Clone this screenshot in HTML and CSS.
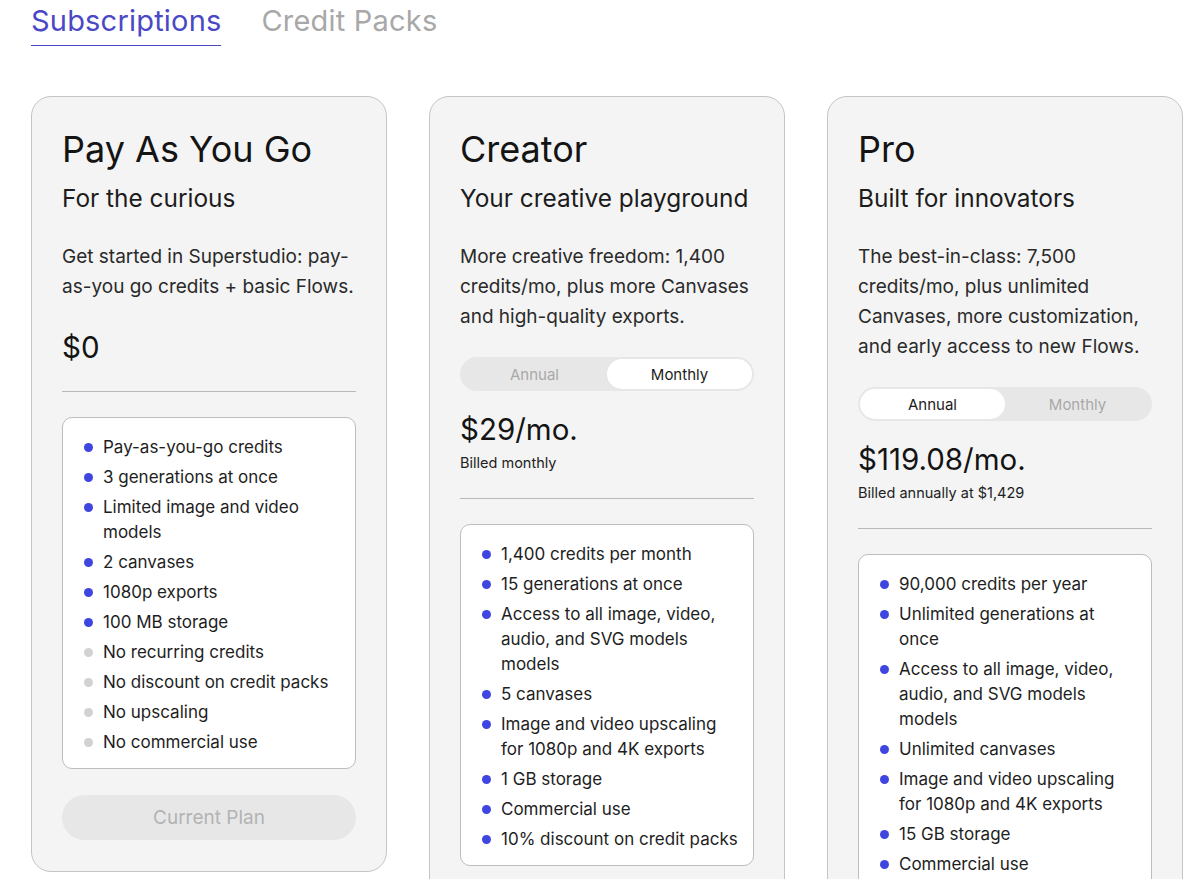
FILE: index.html
```html
<!DOCTYPE html>
<html>
<head>
<meta charset="utf-8">
<link rel="stylesheet" href="styles.css">
</head>
<body>
<div class="page">
  <nav class="tabs">
    <div class="tab active">Subscriptions</div>
    <div class="tab">Credit Packs</div>
  </nav>
  <div class="cards">
    <section class="card">
      <h2 class="title">Pay As You Go</h2>
      <div class="subtitle">For the curious</div>
      <p class="desc">Get started in Superstudio: pay-as-you go credits + basic Flows.</p>
      <div class="price price-free">$0</div>
      <hr class="divider">
      <ul class="features">
        <li>Pay-as-you-go credits</li>
        <li>3 generations at once</li>
        <li>Limited image and video models</li>
        <li>2 canvases</li>
        <li>1080p exports</li>
        <li>100 MB storage</li>
        <li class="off">No recurring credits</li>
        <li class="off">No discount on credit packs</li>
        <li class="off">No upscaling</li>
        <li class="off">No commercial use</li>
      </ul>
      <button class="btn-current">Current Plan</button>
    </section>
    <section class="card">
      <h2 class="title">Creator</h2>
      <div class="subtitle">Your creative playground</div>
      <p class="desc">More creative freedom: 1,400 credits/mo, plus more Canvases and high-quality exports.</p>
      <div class="toggle">
        <div class="opt">Annual</div>
        <div class="opt sel">Monthly</div>
      </div>
      <div class="price">$29/mo.</div>
      <div class="billed">Billed monthly</div>
      <hr class="divider">
      <ul class="features">
        <li>1,400 credits per month</li>
        <li>15 generations at once</li>
        <li>Access to all image, video, audio, and SVG models models</li>
        <li>5 canvases</li>
        <li>Image and video upscaling for 1080p and 4K exports</li>
        <li>1 GB storage</li>
        <li>Commercial use</li>
        <li>10% discount on credit packs</li>
      </ul>
    </section>
    <section class="card">
      <h2 class="title">Pro</h2>
      <div class="subtitle">Built for innovators</div>
      <p class="desc">The best-in-class: 7,500 credits/mo, plus unlimited Canvases, more customization, and early access to new Flows.</p>
      <div class="toggle">
        <div class="opt sel">Annual</div>
        <div class="opt">Monthly</div>
      </div>
      <div class="price">$119.08/mo.</div>
      <div class="billed">Billed annually at $1,429</div>
      <hr class="divider">
      <ul class="features">
        <li>90,000 credits per year</li>
        <li>Unlimited generations at once</li>
        <li>Access to all image, video, audio, and SVG models models</li>
        <li>Unlimited canvases</li>
        <li>Image and video upscaling for 1080p and 4K exports</li>
        <li>15 GB storage</li>
        <li>Commercial use</li>
        <li>10% discount on credit packs</li>
      </ul>
    </section>
  </div>
</div>
</body>
</html>
```

FILE: styles.css
```css
* { box-sizing: border-box; }
html, body { margin: 0; padding: 0; background: #ffffff; }
body {
  font-family: "Inter", "Liberation Sans", sans-serif;
  color: #1a1a1a;
  overflow: hidden;
  height: 879px;
}
.page { padding: 0 0 0 31px; }
.tabs {
  display: flex;
  gap: 40px;
  height: 46px;
  align-items: flex-start;
}
.tab {
  font-size: 29px;
  line-height: 40px;
  color: #a8a8a8;
  padding-top: 1px;
  height: 46px;
  letter-spacing: 0.2px;
}
.tab.active {
  color: #4b48c6;
  border-bottom: 1.5px solid #4b48c6;
}
.cards {
  display: flex;
  gap: 42px;
  margin-top: 50px;
  align-items: flex-start;
}
.card {
  width: 356px;
  flex: none;
  background: #f4f4f4;
  border: 1px solid #c4c4c4;
  border-radius: 20px;
  padding: 25px 30px 31px 30px;
  display: flex;
  flex-direction: column;
}
.title {
  margin: 0;
  font-weight: 400;
  font-size: 36px;
  line-height: 54px;
  color: #141414;
}
.subtitle {
  font-size: 24.4px;
  line-height: 30px;
  margin-top: 7px;
  color: #1c1c1c;
}
.desc {
  margin: 29px 0 0 0;
  font-size: 19px;
  line-height: 30px;
  color: #2a2a2a;
}
.price {
  font-size: 29.5px;
  line-height: 40px;
  color: #141414;
  margin-top: 0;
}
.price-free { margin-top: 25px; }
.billed {
  font-size: 14.5px;
  line-height: 20px;
  color: #222;
  margin-top: 4px;
}
.divider {
  border: 0;
  border-top: 1px solid #b9b9b9;
  margin: 25px 0 0 0;
}
.price-free + .divider { margin-top: 24px; }
.toggle {
  margin-top: 25px;
  height: 34px;
  background: #e7e7e7;
  border-radius: 17px;
  padding: 2px;
  display: flex;
  margin-bottom: 18px;
}
.opt {
  flex: 1;
  border-radius: 15px;
  display: flex;
  align-items: center;
  justify-content: center;
  font-size: 15px;
  color: #a9a9a9;
}
.opt.sel {
  background: #ffffff;
  color: #1c1c1c;
}
.features {
  list-style: none;
  margin: 25px 0 0 0;
  background: #ffffff;
  border: 1px solid #bdbdbd;
  border-radius: 10px;
  padding: 17px 14px 13px 40px;
  display: flex;
  flex-direction: column;
  gap: 5px;
}
.features li {
  position: relative;
  font-size: 17px;
  line-height: 25px;
  color: #1e1e1e;
}
.features li::before {
  content: "";
  position: absolute;
  left: -19px;
  top: 8px;
  width: 9px;
  height: 9px;
  border-radius: 50%;
  background: #3f45e0;
}
.features li.off::before { background: #d2d2d2; }
.btn-current {
  margin-top: 26px;
  height: 45px;
  border: 0;
  border-radius: 23px;
  background: #e7e7e7;
  color: #b3b3b3;
  font-family: inherit;
  font-size: 19px;
}
```
